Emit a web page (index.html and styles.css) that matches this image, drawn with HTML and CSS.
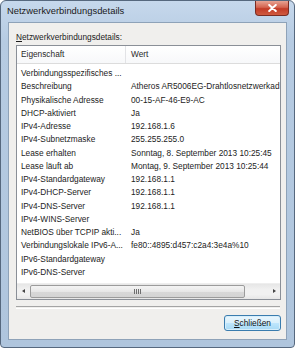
FILE: index.html
```html
<!DOCTYPE html>
<html lang="de">
<head>
    <meta charset="UTF-8">
    <title>Netzwerkverbindungsdetails</title>
    <link rel="stylesheet" href="styles.css">
</head>
<body>
    <div class="window">
        <div class="titlebar">
            <span class="title">Netzwerkverbindungsdetails</span>
            <div class="close-btn">
                <svg width="9" height="8" viewBox="0 0 9 8">
                    <path d="M1.2 1 L7.8 7 M7.8 1 L1.2 7" stroke="#fff" stroke-width="2" stroke-linecap="round"/>
                </svg>
            </div>
        </div>
        <div class="client">
            <div class="group-label"><u>N</u>etzwerkverbindungsdetails:</div>
            <div class="listview">
                <div class="lv-header">
                    <div class="lv-col">Eigenschaft</div>
                    <div class="lv-col">Wert</div>
                </div>
                <div class="lv-rows">
                    <div class="lv-row"><span>Verbindungsspezifisches ...</span><span></span></div>
                    <div class="lv-row"><span>Beschreibung</span><span>Atheros AR5006EG-Drahtlosnetzwerkad</span></div>
                    <div class="lv-row"><span>Physikalische Adresse</span><span>00-15-AF-46-E9-AC</span></div>
                    <div class="lv-row"><span>DHCP-aktiviert</span><span>Ja</span></div>
                    <div class="lv-row"><span>IPv4-Adresse</span><span>192.168.1.6</span></div>
                    <div class="lv-row"><span>IPv4-Subnetzmaske</span><span>255.255.255.0</span></div>
                    <div class="lv-row"><span>Lease erhalten</span><span>Sonntag, 8. September 2013 10:25:45</span></div>
                    <div class="lv-row"><span>Lease läuft ab</span><span>Montag, 9. September 2013 10:25:44</span></div>
                    <div class="lv-row"><span>IPv4-Standardgateway</span><span>192.168.1.1</span></div>
                    <div class="lv-row"><span>IPv4-DHCP-Server</span><span>192.168.1.1</span></div>
                    <div class="lv-row"><span>IPv4-DNS-Server</span><span>192.168.1.1</span></div>
                    <div class="lv-row"><span>IPv4-WINS-Server</span><span></span></div>
                    <div class="lv-row"><span>NetBIOS über TCPIP akti...</span><span>Ja</span></div>
                    <div class="lv-row"><span>Verbindungslokale IPv6-A...</span><span>fe80::4895:d457:c2a4:3e4a%10</span></div>
                    <div class="lv-row"><span>IPv6-Standardgateway</span><span></span></div>
                    <div class="lv-row"><span>IPv6-DNS-Server</span><span></span></div>
                </div>
                <div class="hscroll">
                    <span class="arrow arrow-left"></span>
                    <div class="track">
                        <div class="thumb"><span class="grip"></span></div>
                    </div>
                    <span class="arrow arrow-right"></span>
                </div>
            </div>
            <div class="separator"></div>
            <div class="buttons">
                <div class="btn btn-default"><u>S</u>chließen</div>
            </div>
        </div>
    </div>
</body>
</html>
```

FILE: styles.css
```css
body {
    margin: 0;
    font-family: "Liberation Sans", Arial, sans-serif;
    font-size: 8.3px;
    color: #1c1c1c;
    background: #ffffff;
}
.window {
    width: 295px;
    height: 348px;
    box-sizing: border-box;
    border: 1px solid #56687e;
    border-radius: 6px 6px 4px 4px;
    background: linear-gradient(#c6d8ec, #b6cbe2 40px, #afc5dd);
    display: flex;
    flex-direction: column;
    overflow: hidden;
}
.titlebar {
    height: 21px;
    display: flex;
    align-items: flex-start;
    flex-shrink: 0;
}
.title {
    font-size: 9.4px;
    line-height: 20px;
    margin-left: 6px;
    color: #1a1a1a;
}
.close-btn {
    margin-left: auto;
    margin-right: 5px;
    width: 34px;
    height: 15px;
    box-sizing: border-box;
    border: 1px solid #7a2c22;
    border-top: none;
    border-radius: 0 0 4px 4px;
    background: linear-gradient(#e7a393, #d46450 45%, #c23b27 55%, #cf5a3f);
    display: flex;
    align-items: center;
    justify-content: center;
}
.client {
    flex: 1;
    margin: 0 7px 7px 7px;
    border: 1px solid #8ea2b8;
    background: #f0efed;
    display: flex;
    flex-direction: column;
    padding: 0 5px 0 7px;
}
.group-label {
    margin-top: 8px;
    line-height: 12px;
}
.listview {
    margin-top: 2px;
    height: 255px;
    box-sizing: border-box;
    border: 1px solid #8a8f97;
    background: #ffffff;
    display: flex;
    flex-direction: column;
    overflow: hidden;
}
.lv-header {
    display: grid;
    grid-template-columns: 108px 1fr;
    height: 17px;
    border-bottom: 1px solid #dcdcdc;
    background: linear-gradient(#ffffff, #f7f8fa);
    flex-shrink: 0;
}
.lv-col {
    line-height: 17px;
    padding-left: 4px;
    color: #2a2a2a;
}
.lv-col + .lv-col {
    border-left: 1px solid #e2e3e6;
    padding-left: 5px;
}
.lv-rows {
    flex: 1;
    padding-top: 3px;
}
.lv-row {
    display: grid;
    grid-template-columns: 108px 1fr;
    height: 13.27px;
    line-height: 13.27px;
}
.lv-row span {
    white-space: nowrap;
    overflow: hidden;
    padding-left: 4px;
}
.lv-row span + span {
    padding-left: 6px;
}
.hscroll {
    height: 15px;
    flex-shrink: 0;
    display: flex;
    align-items: center;
    background: linear-gradient(#e6e6e6, #f1f1f1 40%, #f1f1f1 70%, #e6e6e6);
    border-top: 1px solid #eeeeee;
}
.arrow {
    width: 13px;
    height: 15px;
    position: relative;
    flex-shrink: 0;
}
.arrow::after {
    content: "";
    position: absolute;
    top: 5px;
    border-top: 2.5px solid transparent;
    border-bottom: 2.5px solid transparent;
}
.arrow-left::after {
    left: 5px;
    border-right: 3px solid #444;
}
.arrow-right::after {
    left: 6px;
    border-left: 3px solid #444;
}
.track {
    flex: 1;
    height: 13px;
    display: flex;
}
.thumb {
    width: 215px;
    height: 13px;
    box-sizing: border-box;
    border: 1px solid #9b9b9b;
    border-radius: 2px;
    background: linear-gradient(#f4f4f4, #e7e7e7 50%, #d8d8d8 51%, #d4d4d4);
    display: flex;
    align-items: center;
    justify-content: center;
}
.grip {
    width: 7px;
    height: 5px;
    background: repeating-linear-gradient(90deg, #6e6e6e 0 1px, transparent 1px 2px);
}
.separator {
    margin-top: 6px;
    height: 1px;
    border-top: 1px solid #a4a4a4;
    border-bottom: 1px solid #ffffff;
    margin-right: 1px;
}
.buttons {
    display: flex;
    justify-content: flex-end;
    margin-top: 6px;
}
.btn {
    width: 57px;
    height: 16px;
    box-sizing: border-box;
    border: 1px solid #3a7cae;
    border-radius: 3px;
    background: linear-gradient(#eaf6fd, #d9f0fc 50%, #bee6fd 51%, #a7d9f5);
    box-shadow: inset 0 0 0 1px #d6eefb;
    text-align: center;
    line-height: 14px;
    color: #111;
}
```
